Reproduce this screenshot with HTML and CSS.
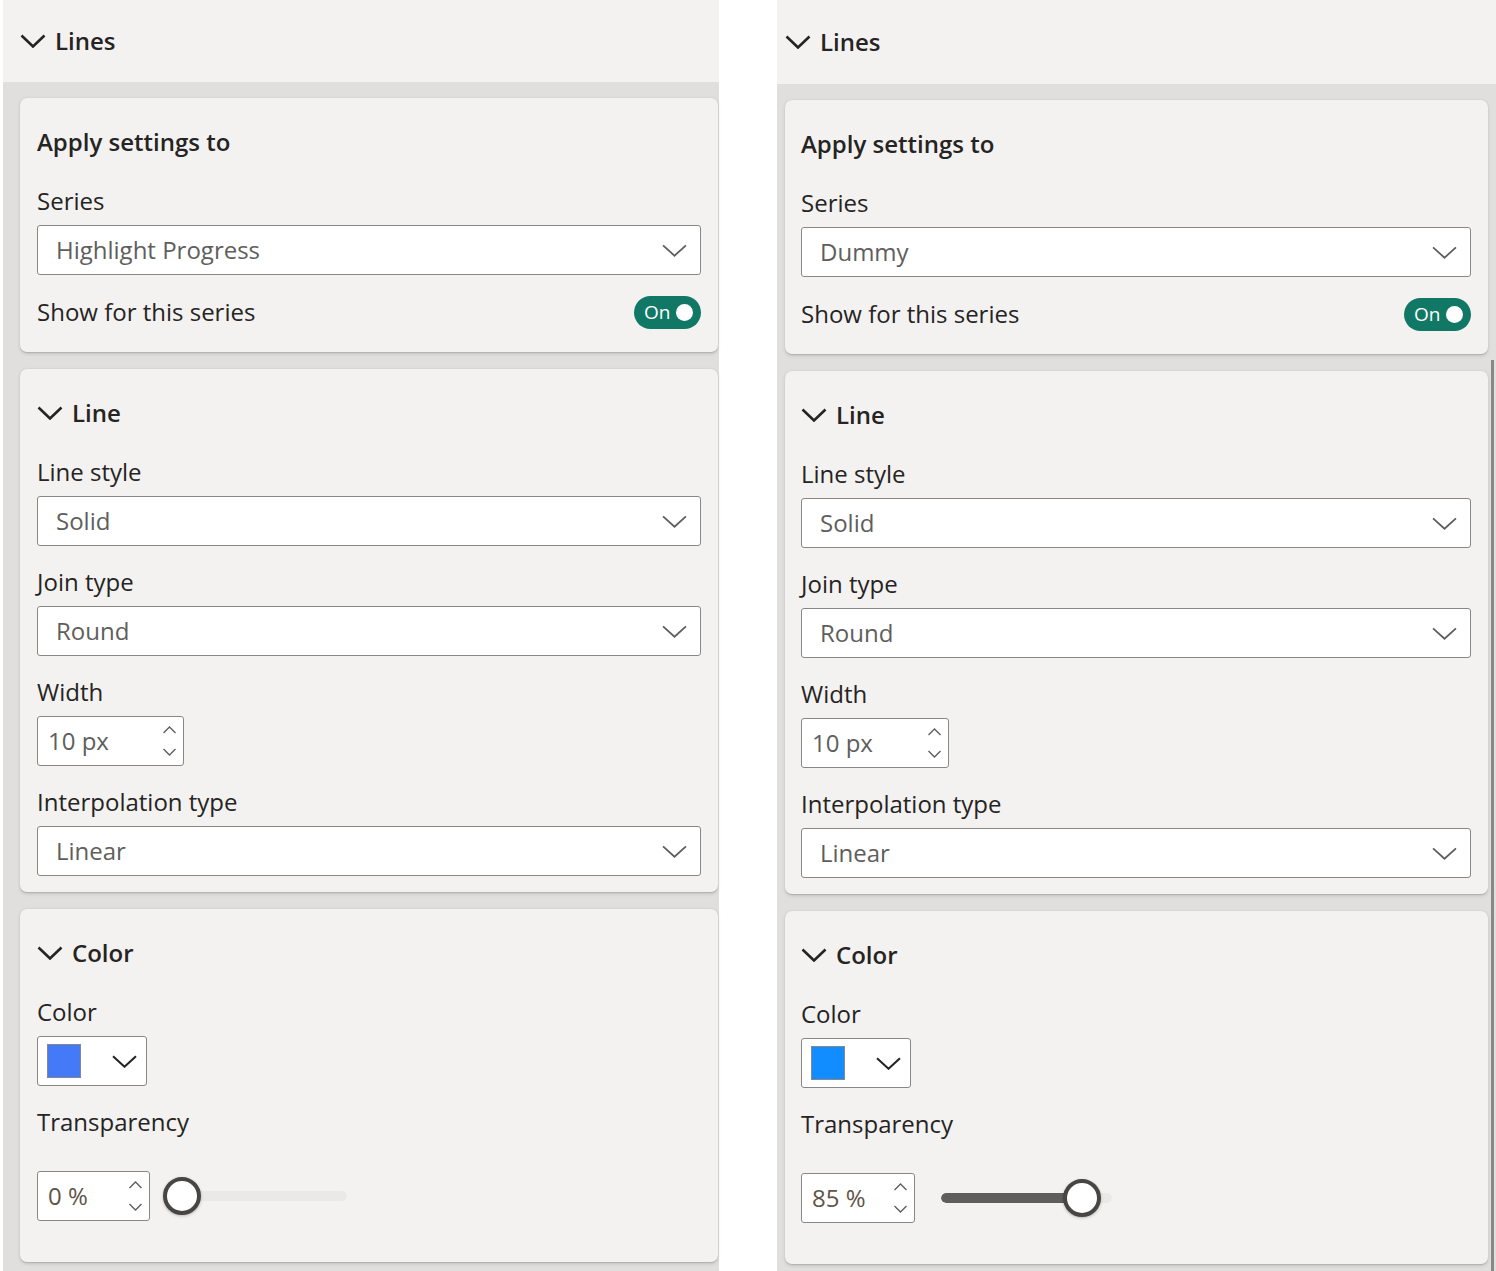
FILE: index.html
```html
<!DOCTYPE html>
<html lang="en">
<head>
    <meta charset="UTF-8">
    <meta name="viewport" content="width=device-width, initial-scale=1.0">
    <title>Lines format pane</title>
    <link rel="stylesheet" href="styles.css">
</head>
<body>
  <div class="page">

    <!-- left pane -->
    <section class="pane pane-l">
      <div class="pane-head">
        <svg class="chev-big" viewBox="0 0 26 14"><polyline points="1.5,1.5 13,12.5 24.5,1.5"/></svg>
        <span>Lines</span>
      </div>
      <div class="pane-body">
        <div class="card">
          <h2 class="card-title">Apply settings to</h2>
          <div class="field">
            <div class="label">Series</div>
            <div class="select"><span>Highlight Progress</span><svg class="chev" viewBox="0 0 24 12"><polyline points="1,1 12,11 23,1"/></svg></div>
          </div>
          <div class="toggle-row">
            <span>Show for this series</span>
            <span class="toggle">On<i></i></span>
          </div>
        </div>

        <div class="card">
          <h2 class="card-title"><svg class="chev-big" viewBox="0 0 26 14"><polyline points="1.5,1.5 13,12.5 24.5,1.5"/></svg>Line</h2>
          <div class="field">
            <div class="label">Line style</div>
            <div class="select"><span>Solid</span><svg class="chev" viewBox="0 0 24 12"><polyline points="1,1 12,11 23,1"/></svg></div>
          </div>
          <div class="field">
            <div class="label">Join type</div>
            <div class="select"><span>Round</span><svg class="chev" viewBox="0 0 24 12"><polyline points="1,1 12,11 23,1"/></svg></div>
          </div>
          <div class="field">
            <div class="label">Width</div>
            <div class="spin spin-px"><span>10 px</span>
              <span class="arrows">
                <svg viewBox="0 0 14 8"><polyline points="1,7 7,1 13,7"/></svg>
                <svg viewBox="0 0 14 8"><polyline points="1,1 7,7 13,1"/></svg>
              </span>
            </div>
          </div>
          <div class="field">
            <div class="label">Interpolation type</div>
            <div class="select"><span>Linear</span><svg class="chev" viewBox="0 0 24 12"><polyline points="1,1 12,11 23,1"/></svg></div>
          </div>
        </div>

        <div class="card">
          <h2 class="card-title"><svg class="chev-big" viewBox="0 0 26 14"><polyline points="1.5,1.5 13,12.5 24.5,1.5"/></svg>Color</h2>
          <div class="field">
            <div class="label">Color</div>
            <div class="picker"><span class="swatch swatch-a"></span><svg class="chev chev-dark" viewBox="0 0 24 12"><polyline points="1,1 12,11 23,1"/></svg></div>
          </div>
          <div class="field">
            <div class="label">Transparency</div>
            <div class="slider-row">
              <div class="spin spin-pct"><span>0 %</span>
                <span class="arrows">
                  <svg viewBox="0 0 14 8"><polyline points="1,7 7,1 13,7"/></svg>
                  <svg viewBox="0 0 14 8"><polyline points="1,1 7,7 13,1"/></svg>
                </span>
              </div>
              <div class="slider">
                <div class="track"><div class="fill" style="width: 0px"></div></div>
                <div class="knob" style="left: 6px"></div>
              </div>
            </div>
          </div>
        </div>
      </div>
    </section>

    <!-- right pane -->
    <section class="pane pane-r">
      <div class="pane-head">
        <svg class="chev-big" viewBox="0 0 26 14"><polyline points="1.5,1.5 13,12.5 24.5,1.5"/></svg>
        <span>Lines</span>
      </div>
      <div class="pane-body">
        <div class="card">
          <h2 class="card-title">Apply settings to</h2>
          <div class="field">
            <div class="label">Series</div>
            <div class="select"><span>Dummy</span><svg class="chev" viewBox="0 0 24 12"><polyline points="1,1 12,11 23,1"/></svg></div>
          </div>
          <div class="toggle-row">
            <span>Show for this series</span>
            <span class="toggle">On<i></i></span>
          </div>
        </div>

        <div class="card">
          <h2 class="card-title"><svg class="chev-big" viewBox="0 0 26 14"><polyline points="1.5,1.5 13,12.5 24.5,1.5"/></svg>Line</h2>
          <div class="field">
            <div class="label">Line style</div>
            <div class="select"><span>Solid</span><svg class="chev" viewBox="0 0 24 12"><polyline points="1,1 12,11 23,1"/></svg></div>
          </div>
          <div class="field">
            <div class="label">Join type</div>
            <div class="select"><span>Round</span><svg class="chev" viewBox="0 0 24 12"><polyline points="1,1 12,11 23,1"/></svg></div>
          </div>
          <div class="field">
            <div class="label">Width</div>
            <div class="spin spin-px"><span>10 px</span>
              <span class="arrows">
                <svg viewBox="0 0 14 8"><polyline points="1,7 7,1 13,7"/></svg>
                <svg viewBox="0 0 14 8"><polyline points="1,1 7,7 13,1"/></svg>
              </span>
            </div>
          </div>
          <div class="field">
            <div class="label">Interpolation type</div>
            <div class="select"><span>Linear</span><svg class="chev" viewBox="0 0 24 12"><polyline points="1,1 12,11 23,1"/></svg></div>
          </div>
        </div>

        <div class="card">
          <h2 class="card-title"><svg class="chev-big" viewBox="0 0 26 14"><polyline points="1.5,1.5 13,12.5 24.5,1.5"/></svg>Color</h2>
          <div class="field">
            <div class="label">Color</div>
            <div class="picker"><span class="swatch swatch-b"></span><svg class="chev chev-dark" viewBox="0 0 24 12"><polyline points="1,1 12,11 23,1"/></svg></div>
          </div>
          <div class="field">
            <div class="label">Transparency</div>
            <div class="slider-row">
              <div class="spin spin-pct"><span>85 %</span>
                <span class="arrows">
                  <svg viewBox="0 0 14 8"><polyline points="1,7 7,1 13,7"/></svg>
                  <svg viewBox="0 0 14 8"><polyline points="1,1 7,7 13,1"/></svg>
                </span>
              </div>
              <div class="slider">
                <div class="track"><div class="fill" style="width: 141px"></div></div>
                <div class="knob" style="left: 141px"></div>
              </div>
            </div>
          </div>
        </div>
      </div>
      <div class="scrollbar"></div>
    </section>

  </div>
</body>
</html>
```

FILE: styles.css
```css
*{
  margin: 0;
  padding: 0;
  box-sizing: border-box;
}
body {
  background: #fff;
  font-family: "Open Sans", "Noto Sans", sans-serif;
  color: #252423;
  font-size: 24px;
  line-height: 36px;
}
.page {
  display: flex;
  height: 1271px;
  overflow: hidden;
}

/* panes */
.pane {
  position: relative;
  display: flex;
  flex-direction: column;
  background: #e1dfdd;
}
.pane-l {
  width: 716px;
  margin-left: 3px;
}
.pane-r {
  width: 719px;
  margin-left: 58px;
}
.pane-head {
  display: flex;
  align-items: center;
  gap: 9px;
  height: 82px;
  padding-left: 17px;
  background: #f3f2f1;
  font-weight: 600;
}
.pane-r .pane-head {
  height: 84px;
  padding-left: 8px;
}
.pane-body {
  display: flex;
  flex-direction: column;
  gap: 17px;
  padding: 16px 1px 0 17px;
}
.pane-r .pane-body {
  padding: 16px 8px 0 8px;
}
.scrollbar {
  position: absolute;
  right: 2px;
  top: 360px;
  bottom: 0;
  width: 3px;
  background: #8a8886;
}

.chev-big {
  width: 26px;
  height: 14px;
  fill: none;
  stroke: #252423;
  stroke-width: 2.6;
}

/* cards */
.card {
  background: #f3f2f1;
  border-radius: 7px;
  padding: 26px 17px 16px 17px;
  box-shadow: 0 1.6px 3.6px rgba(0, 0, 0, 0.13), 0 0.3px 0.9px rgba(0, 0, 0, 0.11);
}
.pane-r .card {
  padding-left: 16px;
}
.card-title {
  display: flex;
  align-items: center;
  gap: 9px;
  font-size: 24px;
  line-height: 36px;
  font-weight: 600;
  margin-bottom: 23px;
}
.field + .field {
  margin-top: 18px;
}
.label {
  margin-bottom: 6px;
  color: #252423;
}

/* dropdown */
.select {
  display: flex;
  align-items: center;
  justify-content: space-between;
  height: 50px;
  padding: 0 13px 0 18px;
  background: #fff;
  border: 1px solid #8a8886;
  border-radius: 3px;
  color: #605e5c;
}
.chev {
  width: 25px;
  height: 13px;
  fill: none;
  stroke: #605e5c;
  stroke-width: 1.7;
}
.chev-dark {
  stroke: #252423;
  stroke-width: 2;
}

/* toggle */
.toggle-row {
  display: flex;
  align-items: center;
  justify-content: space-between;
  height: 40px;
  margin-top: 17px;
  margin-bottom: 4px;
}
.toggle {
  display: flex;
  align-items: center;
  justify-content: space-between;
  width: 67px;
  height: 33px;
  padding: 0 8px 0 10px;
  border-radius: 17px;
  background: #117865;
  color: #fff;
  font-size: 19px;
  line-height: 33px;
}
.toggle i {
  width: 17px;
  height: 17px;
  border-radius: 50%;
  background: #fff;
}

/* number spinner */
.spin {
  display: flex;
  align-items: center;
  justify-content: space-between;
  height: 50px;
  padding: 0 6px 0 10px;
  background: #fff;
  border: 1px solid #8a8886;
  border-radius: 3px;
  color: #605e5c;
}
.spin-px {
  width: 147px;
}
.spin-pct {
  width: 113px;
  color: #5f5448;
}
.pane-r .spin-px {
  width: 148px;
}
.pane-r .spin-pct {
  width: 114px;
}
.arrows {
  display: flex;
  flex-direction: column;
  gap: 14px;
}
.arrows svg {
  display: block;
  width: 15px;
  height: 8px;
  fill: none;
  stroke: #605e5c;
  stroke-width: 1.4;
}

/* colour picker */
.picker {
  display: flex;
  align-items: center;
  justify-content: space-between;
  width: 110px;
  height: 50px;
  padding: 0 9px 0 9px;
  background: #fff;
  border: 1px solid #8a8886;
  border-radius: 3px;
}
.swatch {
  width: 34px;
  height: 34px;
  border: 1px solid #8a8886;
}
.swatch-a {
  background: #4479f8;
}
.swatch-b {
  background: #118dff;
}

/* slider */
.slider-row {
  display: flex;
  align-items: center;
  height: 100px;
}
.slider {
  position: relative;
  width: 171px;
  height: 40px;
  margin-left: 26px;
  display: flex;
  align-items: center;
}
.track {
  width: 100%;
  height: 10px;
  border-radius: 5px;
  background: #ebe9e7;
  overflow: hidden;
}
.fill {
  height: 100%;
  border-radius: 5px;
  background: #605e5c;
}
.knob {
  position: absolute;
  top: 1px;
  width: 38px;
  height: 38px;
  margin-left: -19px;
  border-radius: 50%;
  background: #fff;
  border: 4px solid #484644;
  box-shadow: 0 1px 3px rgba(0, 0, 0, 0.25);
}
```
